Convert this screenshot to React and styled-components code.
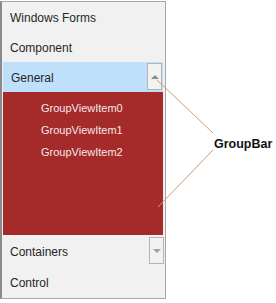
import React from 'react';
import styled, { createGlobalStyle } from 'styled-components';

const GlobalStyle = createGlobalStyle`
  html, body {
    margin: 0;
    padding: 0;
    background: #ffffff;
  }
  body {
    font-family: "Liberation Sans", Arial, sans-serif;
  }
`;

const Page = styled.div`
  position: relative;
  width: 276px;
  height: 303px;
  display: flex;
  align-items: flex-start;
  background: #ffffff;
`;

const Bar = styled.div`
  margin-top: 1px;
  width: 163px;
  height: 296px;
  border: 1px solid #a6a6a6;
  border-left: 2px solid #8a8a8a;
  background: #f1f1f1;
  display: flex;
  flex-direction: column;
`;

const Header = styled.div`
  position: relative;
  height: ${(p) => p.h || 30}px;
  display: flex;
  align-items: center;
  padding-left: 8px;
  padding-top: 1px;
  box-sizing: border-box;
  margin-left: ${(p) => (p.selected ? 1 : 0)}px;
  margin-right: 2px;
  background: ${(p) => (p.selected ? '#bee0fb' : 'transparent')};
  font-size: 12px;
  color: #262626;
`;

const ScrollButton = styled.div`
  position: absolute;
  right: ${(p) => p.right}px;
  top: ${(p) => p.top}px;
  width: 15px;
  height: 27px;
  box-sizing: border-box;
  border: 1px solid #b4b4b4;
  background: #f2f2f2;
  display: flex;
  align-items: center;
  justify-content: center;
`;

const Arrow = styled.span`
  width: 0;
  height: 0;
  border-left: 4px solid transparent;
  border-right: 4px solid transparent;
  ${(p) =>
    p.up
      ? 'border-bottom: 4px solid #8c8c8c;'
      : 'border-top: 4px solid #a0a0a0;'}
`;

const Client = styled.div`
  height: 143px;
  margin: 0 2px 0 1px;
  background: #a52a2a;
  display: flex;
  flex-direction: column;
  padding-top: 5px;
  box-sizing: border-box;
`;

const Item = styled.div`
  height: 22px;
  display: flex;
  align-items: center;
  padding-left: 38px;
  font-size: 11px;
  color: #f6e8e8;
`;

const Callout = styled.div`
  padding: 137px 0 0 48px;
  font-size: 12.5px;
  font-weight: bold;
  color: #111111;
`;

const Leader = styled.svg`
  position: absolute;
  left: 0;
  top: 0;
  pointer-events: none;
`;

const items = ['GroupViewItem0', 'GroupViewItem1', 'GroupViewItem2'];

export default function App() {
  return (
    <>
      <GlobalStyle />
      <Page>
        <Bar>
          <Header h={30}>Windows Forms</Header>
          <Header h={30}>Component</Header>
          <Header h={30} selected>
            General
            <ScrollButton right={1} top={1}>
              <Arrow up />
            </ScrollButton>
          </Header>
          <Client>
            {items.map((it) => (
              <Item key={it}>{it}</Item>
            ))}
          </Client>
          <Header h={32}>
            Containers
            <ScrollButton right={-1} top={2}>
              <Arrow />
            </ScrollButton>
          </Header>
          <Header h={30}>Control</Header>
        </Bar>
        <Callout>GroupBar</Callout>
        <Leader width="276" height="303">
          <line x1="157" y1="80" x2="213" y2="133" stroke="#d89a68" strokeWidth="1" />
          <line x1="158" y1="207" x2="213" y2="150" stroke="#d89a68" strokeWidth="1" />
        </Leader>
      </Page>
    </>
  );
}
